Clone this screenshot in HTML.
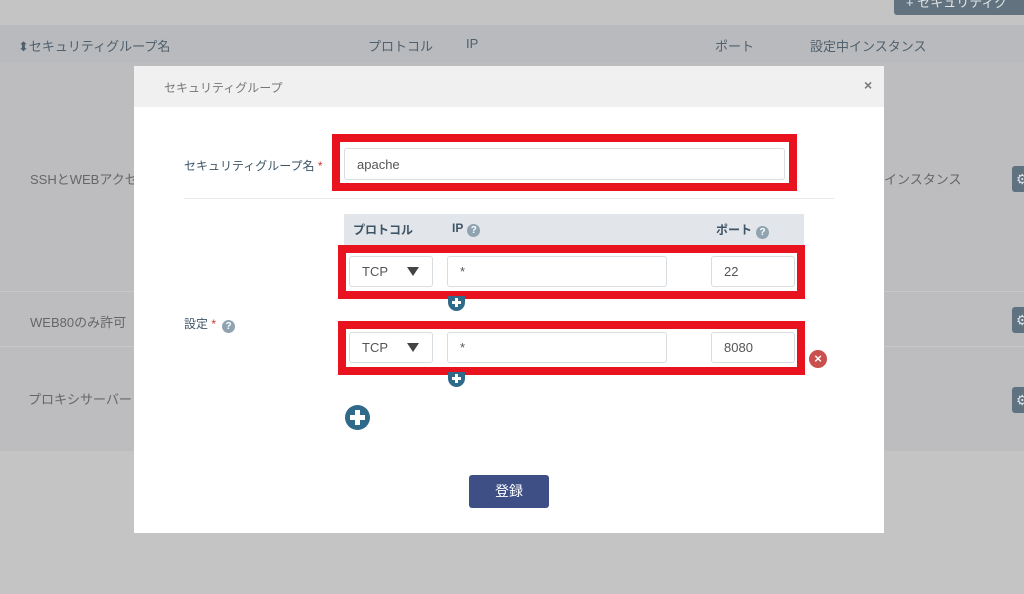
<!DOCTYPE html>
<html><head><meta charset="utf-8"><style>
*{box-sizing:border-box;margin:0;padding:0}
body{width:1024px;height:594px;overflow:hidden;background:#c4c4c4;font-family:"Liberation Sans","Noto Sans CJK JP",sans-serif;position:relative;font-size:13px}
.a{position:absolute}
.t{color:#5a646c}
.inp{position:absolute;background:#fff;border:1px solid #d8dde2;border-radius:3px;color:#555;font-size:13px;padding-left:12px;display:flex;align-items:center}
.red{position:absolute;border:8px solid #e8131f}
.gear{position:absolute;left:1012px;width:24px;height:26px;background:#5f7280;border-radius:3px;color:#dfe5e8;font-size:14px;line-height:26px;padding-left:4px}
.plus{position:absolute;border-radius:50%;background:#2f6a8a}
.q{display:inline-block;width:13px;height:13px;border-radius:50%;background:#8fa4b0;color:#fff;font-size:10px;font-weight:bold;text-align:center;line-height:13px;vertical-align:-1px;margin-left:4px}
.ar{position:absolute;width:0;height:0;border-left:6px solid transparent;border-right:6px solid transparent;border-top:9px solid #444}
</style></head><body>
<div class="a" style="left:894px;top:0;width:130px;height:15px;background:#62737f;border-radius:0 0 0 3px;overflow:hidden;color:#dfe5e8;font-size:13px;line-height:6px;padding-left:12px;white-space:nowrap">+ セキュリティグ</div>
<div class="a" style="left:0;top:25px;width:1024px;height:38px;background:#b9babd"></div>
<div class="a t" style="left:18px;top:36px;font-size:13px;color:#50606c">⬍セキュリティグループ名</div>
<div class="a t" style="left:368px;top:36px;color:#50606c">プロトコル</div>
<div class="a t" style="left:466px;top:36px;color:#50606c">IP</div>
<div class="a t" style="left:715px;top:36px;color:#50606c">ポート</div>
<div class="a t" style="left:810px;top:36px;color:#50606c">設定中インスタンス</div>
<div class="a" style="left:0;top:63px;width:1024px;height:388px;background:#bdbdbf"></div>
<div class="a" style="left:0;top:291px;width:1024px;height:1px;background:#c8c8ca"></div>
<div class="a" style="left:0;top:346px;width:1024px;height:1px;background:#c8c8ca"></div>
<div class="a t" style="left:30px;top:169px;color:#666">SSHとWEBアクセ</div>
<div class="a t" style="left:30px;top:312px;color:#666">WEB80のみ許可</div>
<div class="a t" style="left:28px;top:389px;color:#666">プロキシサーバー</div>
<div class="a t" style="left:884px;top:169px;color:#666">インスタンス</div>
<div class="gear" style="top:166px">⚙</div>
<div class="gear" style="top:307px">⚙</div>
<div class="gear" style="top:387px">⚙</div>

<div class="a" style="left:134px;top:66px;width:750px;height:467px;background:#fff"></div>
<div class="a" style="left:134px;top:66px;width:750px;height:41px;background:#f0f0f0"></div>
<div class="a" style="left:164px;top:79px;color:#777;font-size:12px">セキュリティグループ</div>
<div class="a" style="left:864px;top:77px;color:#777;font-weight:bold;font-size:14px">×</div>

<div class="a" style="left:184px;top:157px;color:#3e5566;font-size:12px">セキュリティグループ名 <span style="color:#c33">*</span></div>
<div class="inp" style="left:344px;top:148px;width:441px;height:32px">apache</div>
<div class="red" style="left:332px;top:134px;width:465px;height:57px"></div>
<div class="a" style="left:184px;top:198px;width:650px;height:1px;background:#e8e8e8"></div>

<div class="a" style="left:344px;top:214px;width:460px;height:31px;background:#e2e6ea"></div>
<div class="a" style="left:353px;top:221px;color:#3e5566;font-weight:bold;font-size:12px">プロトコル</div>
<div class="a" style="left:452px;top:221px;color:#3e5566;font-weight:bold;font-size:12px">IP<span class="q">?</span></div>
<div class="a" style="left:716px;top:221px;color:#3e5566;font-weight:bold;font-size:12px">ポート<span class="q">?</span></div>

<div class="inp" style="left:349px;top:256px;width:84px;height:31px">TCP</div><div class="ar" style="left:407px;top:267px"></div>
<div class="inp" style="left:447px;top:256px;width:220px;height:31px">*</div>
<div class="inp" style="left:711px;top:256px;width:84px;height:31px">22</div>
<div class="red" style="left:338px;top:245px;width:467px;height:54px"></div>
<div class="plus" style="left:448px;top:296px;width:17px;height:15px;border-radius:0 0 9px 9px"></div>

<div class="a" style="left:184px;top:315px;color:#3e5566;font-size:12px">設定 <span style="color:#c33">*</span><span class="q" style="margin-left:6px">?</span></div>

<div class="inp" style="left:349px;top:332px;width:84px;height:31px">TCP</div><div class="ar" style="left:407px;top:343px"></div>
<div class="inp" style="left:447px;top:332px;width:220px;height:31px">*</div>
<div class="inp" style="left:711px;top:332px;width:84px;height:31px">8080</div>
<div class="red" style="left:338px;top:321px;width:467px;height:54px"></div>
<div class="plus" style="left:448px;top:372px;width:17px;height:15px;border-radius:0 0 9px 9px"></div>
<div class="a" style="left:809px;top:350px;width:18px;height:18px;border-radius:50%;background:#c9504c;color:#fff;font-size:13px;font-weight:bold;text-align:center;line-height:18px">×</div>

<div class="plus" style="left:345px;top:405px;width:25px;height:25px"></div>
<div class="a" style="left:350px;top:415px;width:15px;height:5px;background:#fff"></div>
<div class="a" style="left:355px;top:410px;width:5px;height:15px;background:#fff"></div>
<div class="a" style="left:452px;top:301px;width:9px;height:3px;background:#fff"></div>
<div class="a" style="left:455px;top:298px;width:3px;height:9px;background:#fff"></div>
<div class="a" style="left:452px;top:377px;width:9px;height:3px;background:#fff"></div>
<div class="a" style="left:455px;top:374px;width:3px;height:9px;background:#fff"></div>

<div class="a" style="left:469px;top:475px;width:80px;height:33px;background:#3d4f84;border-radius:3px;color:#fff;font-size:14px;text-align:center;line-height:33px">登録</div>
</body></html>
